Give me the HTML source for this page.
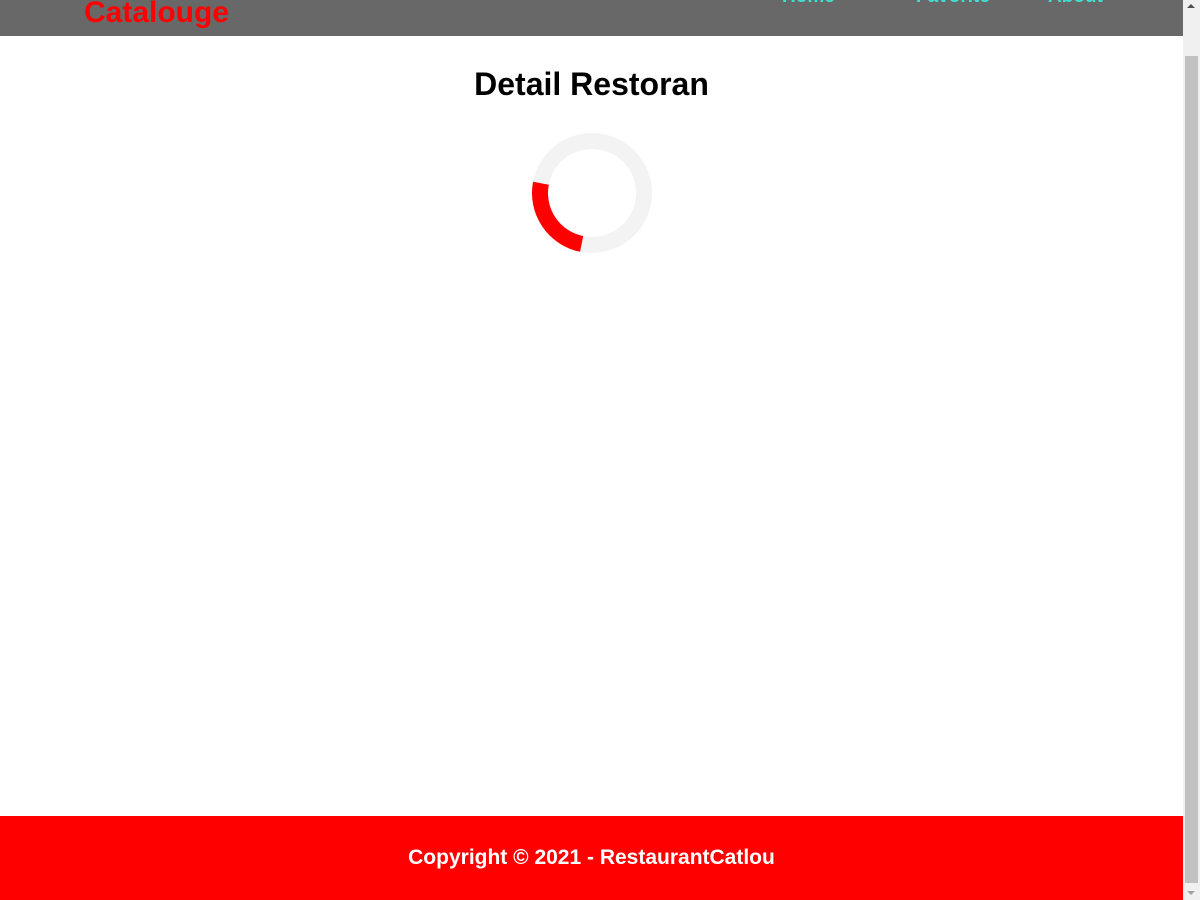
<!DOCTYPE html>
<html><head><style>
html,body{margin:0;padding:0;width:1200px;height:900px;overflow:hidden;background:#fff;font-family:"Liberation Sans",Arial,sans-serif}
.hdr{position:absolute;left:0;top:0;width:1183px;height:36px;background:#696868}
.logo{position:absolute;left:84px;top:-4px;color:#f00;font-weight:bold;font-size:30px;line-height:34px}
.nav{position:absolute;top:-13px;color:#40e0d0;font-weight:bold;font-size:19px;line-height:20px}
h1{position:absolute;left:0;width:1183px;top:66px;margin:0;text-align:center;font-size:32px;line-height:36px;font-weight:bold}
.ft{position:absolute;left:0;top:816px;width:1183px;height:84px;background:#f00;color:#fff;font-weight:bold;font-size:21px;text-align:center;line-height:84px}
.sb{position:absolute;left:1183px;top:0;width:17px;height:900px;background:#f0f0f0}
.th{position:absolute;left:1185px;top:56px;width:13px;height:827px;background:#c1c1c1}
</style></head><body>
<div class="hdr">
<div class="logo">Catalouge</div>
<div class="nav" style="left:782px">Home</div>
<div class="nav" style="left:916px">Favorite</div>
<div class="nav" style="left:1048px">About</div>
</div>
<h1>Detail Restoran</h1>
<svg style="position:absolute;left:532px;top:133px" width="120" height="120" viewBox="0 0 120 120">
<circle cx="60" cy="60" r="52" fill="none" stroke="#f3f3f3" stroke-width="16"/>
<circle cx="60" cy="60" r="52" fill="none" stroke="#f00" stroke-width="16" stroke-dasharray="81 400" transform="rotate(101.5 60 60)"/>
</svg>
<div class="ft">Copyright © 2021 - RestaurantCatlou</div>
<div class="sb"></div><div class="th"></div>
<div style="position:absolute;left:1187px;top:4px;width:0;height:0;border-left:4px solid transparent;border-right:4px solid transparent;border-bottom:4px solid #505050"></div>
<div style="position:absolute;left:1187px;top:891px;width:0;height:0;border-left:4px solid transparent;border-right:4px solid transparent;border-top:4px solid #a3a3a3"></div>
</body></html>
